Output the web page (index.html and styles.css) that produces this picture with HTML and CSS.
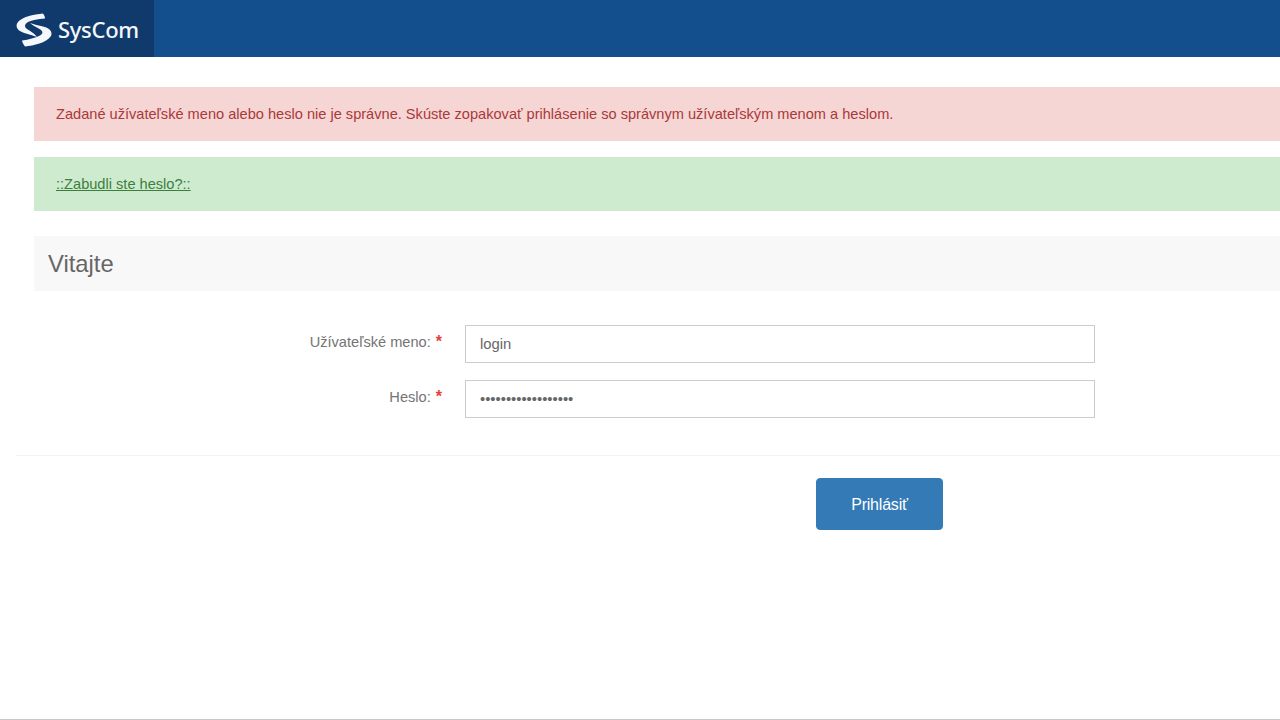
FILE: index.html
```html
<!DOCTYPE html>
<html lang="sk">
<head>
<meta charset="utf-8">
<title>SysCom</title>
<link rel="stylesheet" href="styles.css">
</head>
<body>
<header class="topbar">
  <a class="brand" href="#">
    <svg class="brand-mark" viewBox="0 0 36 36" width="36" height="36" aria-hidden="true">
      <path fill="#f4f7fb" d="M27 1.500C18 2.500 5 4.500 1 11.500C-1 17 4.500 20 10 21.500C13 22.500 17 23.500 21 25C18 21 14 19 11 17C8 15 8.500 12 12 10C16 8 22 7 29 6.500C29 4.500 28 3 27 1.500Z"/>
      <path fill="#f4f7fb" d="M14 11C17 13.500 20 15 23.500 17C27 19 27.500 21.500 24 23.500C19 26 13 27.500 6 28.500C6.500 31 7.500 32.500 9 34.500C18 33.500 30 31 35 24C37 18.500 32.500 16 27 14.500C23 13.500 18 12.500 14 11Z"/>
    </svg>
    <span class="brand-name">SysCom</span>
  </a>
</header>
<main class="page">
  <div class="alert alert-error">Zadané užívateľské meno alebo heslo nie je správne. Skúste zopakovať prihlásenie so správnym užívateľským menom a heslom.</div>
  <div class="alert alert-success"><a href="#">::Zabudli ste heslo?::</a></div>
  <h1 class="panel-title">Vitajte</h1>
  <form class="login-form">
    <div class="form-row">
      <label class="form-label" for="login">Užívateľské meno: <span class="req">*</span></label>
      <input class="form-input" id="login" type="text" value="login">
    </div>
    <div class="form-row">
      <label class="form-label" for="pass">Heslo: <span class="req">*</span></label>
      <input class="form-input" id="pass" type="password" value="abcdefghijklmnopqr">
    </div>
    <div class="form-actions">
      <button class="btn" type="button">Prihlásiť</button>
    </div>
  </form>
</main>
</body>
</html>
```
FILE: styles.css
```css
* { box-sizing: border-box; }
html, body { height: 100%; }
body {
  margin: 0;
  height: 720px;
  overflow: hidden;
  background: #fff;
  font-family: "Liberation Sans", Arial, sans-serif;
  font-size: 14.6px;
  color: #666;
  border-bottom: 1px solid #c8c8c8;
}
.topbar {
  height: 57px;
  background: #134f8d;
  display: flex;
}
.brand {
  width: 154px;
  background: #0f3a6b;
  display: flex;
  align-items: center;
  gap: 6px;
  padding-left: 16px;
  text-decoration: none;
}
.brand-mark { flex: none; margin-top: 2px; }
.brand-name {
  font-family: "Noto Sans", "Open Sans", sans-serif;
  font-size: 22px;
  font-weight: 500;
  color: #f4f6f9;
  letter-spacing: -0.3px;
}
.page {
  padding: 30px 0 0 16px;
}
.alert {
  margin-left: 18px;
  height: 54px;
  padding-left: 22px;
  display: flex;
  align-items: center;
  margin-bottom: 16px;
}
.alert-error { background: #f6d5d5; color: #a93a38; }
.alert-success { background: #ceebd0; margin-bottom: 25px; }
.alert-success a { color: #3c7f3d; text-decoration: underline; }
.panel-title {
  margin: 0 0 34px 18px;
  height: 55px;
  padding-left: 14px;
  display: flex;
  align-items: center;
  background: #f8f8f8;
  font-size: 23.8px;
  font-weight: 400;
  color: #666;
}
.form-row {
  display: flex;
  margin-bottom: 17px;
}
.form-label {
  width: 426px;
  padding-top: 8px;
  text-align: right;
  color: #747474;
  line-height: 18px;
}
.req { color: #e2403c; font-size: 16px; font-weight: 700; line-height: 14px; margin-left: 1px; }
.form-input {
  width: 630px;
  height: 38px;
  margin-left: 23px;
  padding: 0 14px;
  border: 1px solid #ccc;
  background: #fff;
  font-family: "Liberation Sans", Arial, sans-serif;
  font-size: 14.8px;
  color: #666;
  outline: none;
}
.form-actions {
  border-top: 1px solid #f3f3f3;
  margin-top: 37px;
  padding: 22px 0 0 800px;
}
.btn {
  display: block;
  width: 127px;
  height: 52px;
  padding-top: 2px;
  border: 1px solid #337ab7;
  border-radius: 4px;
  background: #337ab7;
  color: #fff;
  font-family: "Liberation Sans", Arial, sans-serif;
  font-size: 16px;
  letter-spacing: -0.2px;
}
```
